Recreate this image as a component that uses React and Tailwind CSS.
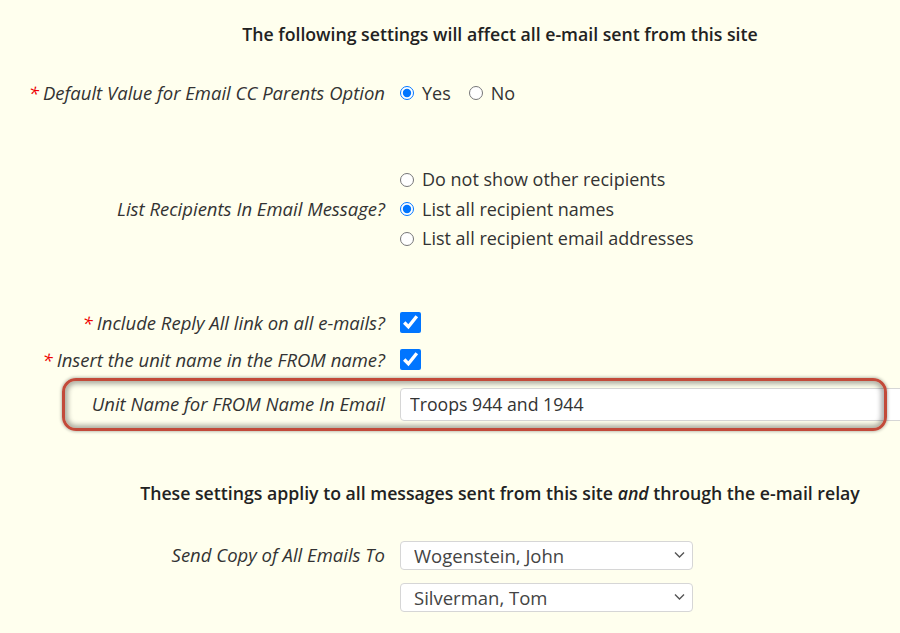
import React from "react";

const font = { fontFamily: "'Open Sans', Lato, sans-serif" };

function Label({ children, req }) {
  return (
    <div className="w-[385px] shrink-0 text-right italic text-[18.5px] text-[#333] whitespace-nowrap">
      {req && <span className="text-[#e00] mr-[4px]">*</span>}
      {children}
    </div>
  );
}

function Radio({ checked, name, label }) {
  return (
    <label className="flex items-center gap-[8px]">
      <input type="radio" name={name} defaultChecked={checked} className="m-0 w-[14px] h-[14px] accent-[#0075ff]" />
      <span>{label}</span>
    </label>
  );
}

function Check() {
  return <input type="checkbox" defaultChecked className="m-0 w-[21px] h-[21px] accent-[#0075ff]" />;
}

function Select({ value }) {
  return (
    <div className="relative w-[293px] h-[29px]">
      <select
        defaultValue={value}
        className="appearance-none w-full h-full bg-white border border-[#d6d6d6] rounded-[4px] pl-[13px] text-[#444] text-[18.5px] outline-none"
        style={font}
      >
        <option>{value}</option>
      </select>
      <svg className="absolute right-[8px] top-[10px] pointer-events-none" width="11" height="8" viewBox="0 0 11 8">
        <path d="M1 1.5 L5.5 6 L10 1.5" fill="none" stroke="#555" strokeWidth="1.4" />
      </svg>
    </div>
  );
}

export default function App() {
  return (
    <div className="w-full h-[633px] overflow-hidden bg-[#ffffee] text-[18px] text-[#333]" style={font}>
      <div className="w-[1000px] flex flex-col">
        <div className="h-[24px] mt-[22px] text-center font-semibold text-[17.7px] text-[#222] leading-[24px]">
          The following settings will affect all e-mail sent from this site
        </div>

        <div className="flex items-center h-[24px] mt-[35px] gap-[15px]">
          <Label req>Default Value for Email CC Parents Option</Label>
          <div className="flex items-center gap-[18px]">
            <Radio name="cc" checked label="Yes" />
            <Radio name="cc" label="No" />
          </div>
        </div>

        <div className="flex items-center mt-[60px] gap-[15px]">
          <Label>List Recipients In Email Message?</Label>
          <div className="flex flex-col">
            <div className="h-[29.5px] flex items-center"><Radio name="lr" label="Do not show other recipients" /></div>
            <div className="h-[29.5px] flex items-center"><Radio name="lr" checked label="List all recipient names" /></div>
            <div className="h-[29.5px] flex items-center"><Radio name="lr" label="List all recipient email addresses" /></div>
          </div>
        </div>

        <div className="flex items-center h-[24px] mt-[57px] gap-[15px]">
          <Label req>Include Reply All link on all e-mails?</Label>
          <Check />
        </div>

        <div className="flex items-center h-[24px] mt-[13px] gap-[15px]">
          <Label req>Insert the unit name in the FROM name?</Label>
          <Check />
        </div>

        <div className="relative flex items-center h-[33px] mt-[16px] gap-[15px]">
          <Label>Unit Name for FROM Name In Email</Label>
          <input
            type="text"
            defaultValue="Troops 944 and 1944"
            className="w-[560px] h-[33px] bg-white border border-[#d6d6d6] rounded-[4px] pl-[9px] text-[#333] text-[17.7px] outline-none"
            style={font}
          />
          <div className="absolute left-[62px] top-[-10px] w-[825px] h-[53px] border-[3px] border-[#c24a3a] rounded-[14px] shadow-[inset_0_0_5px_3px_rgba(0,0,0,0.32),0_0_3px_1px_rgba(0,0,0,0.25)] pointer-events-none" />
        </div>

        <div className="h-[24px] mt-[60px] text-center font-semibold text-[17.7px] text-[#222] leading-[24px]">
          These settings appliy to all messages sent from this site <i>and</i> through the e-mail relay
        </div>

        <div className="flex items-center mt-[36px] gap-[15px]">
          <Label>Send Copy of All Emails To</Label>
          <Select value="Wogenstein, John" />
        </div>
        <div className="flex mt-[13px] gap-[15px]">
          <div className="w-[385px] shrink-0" />
          <Select value="Silverman, Tom" />
        </div>
      </div>
    </div>
  );
}
